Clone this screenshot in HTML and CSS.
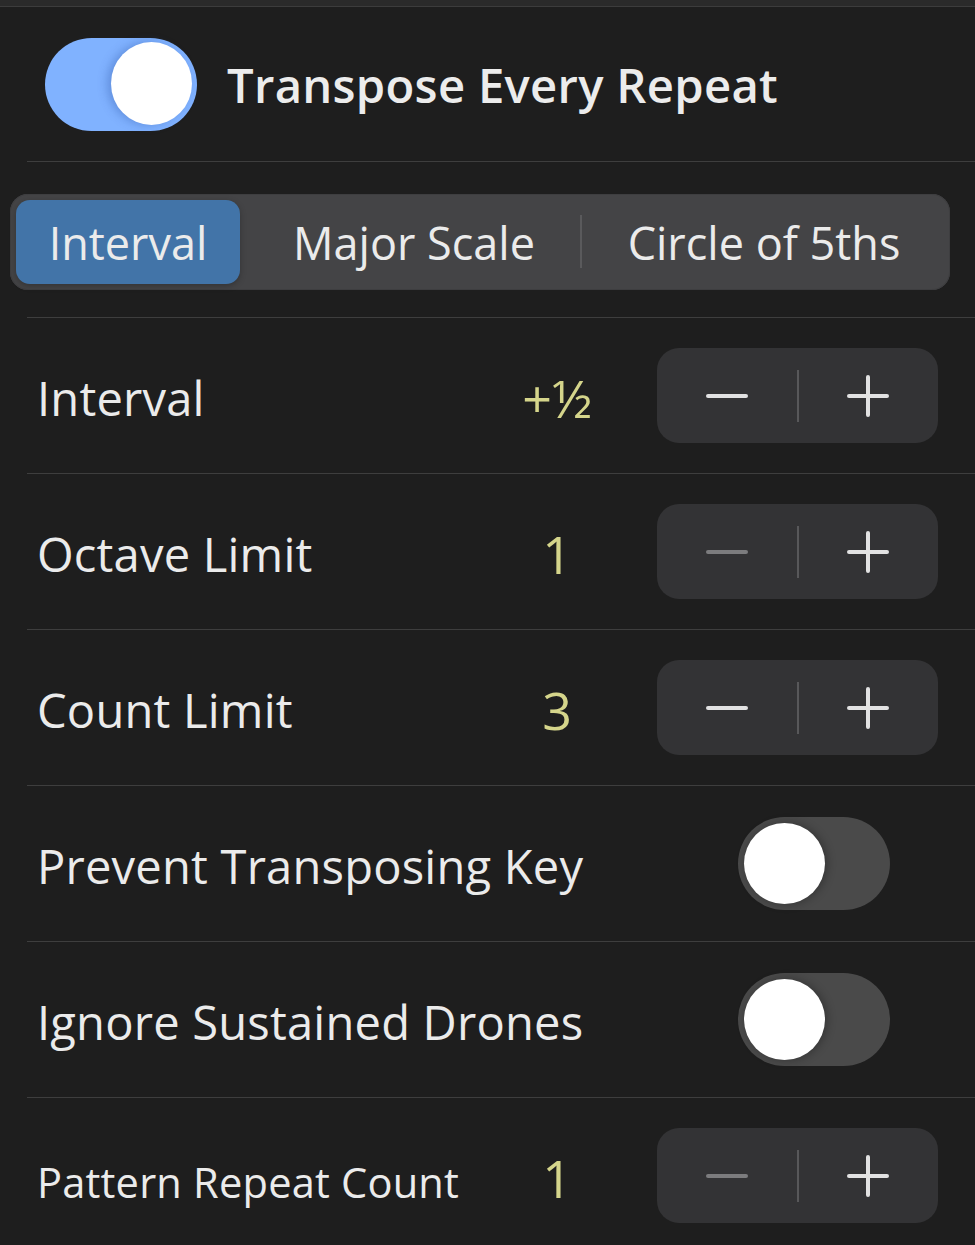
FILE: index.html
```html
<!DOCTYPE html>
<html>
<head>
<meta charset="utf-8">
<link rel="stylesheet" href="styles.css">
</head>
<body>
<div class="topbar"></div>
<div class="header">
  <div class="toggle on"><div class="knob"></div></div>
  <div class="title">Transpose Every Repeat</div>
</div>
<div class="segment-section">
  <div class="segmented">
    <div class="seg selected">Interval</div>
    <div class="seg mid">Major Scale</div>
    <div class="seg sep">Circle of 5ths</div>
  </div>
</div>
<div class="row">
  <div class="label">Interval</div>
  <div class="value">+½</div>
  <div class="stepper">
    <div class="btn minus"><span class="bar-h"></span></div>
    <div class="divider-v"></div>
    <div class="btn plus"><span class="bar-h"></span><span class="bar-v"></span></div>
  </div>
</div>
<div class="row">
  <div class="label">Octave Limit</div>
  <div class="value">1</div>
  <div class="stepper">
    <div class="btn minus disabled"><span class="bar-h"></span></div>
    <div class="divider-v"></div>
    <div class="btn plus"><span class="bar-h"></span><span class="bar-v"></span></div>
  </div>
</div>
<div class="row">
  <div class="label">Count Limit</div>
  <div class="value">3</div>
  <div class="stepper">
    <div class="btn minus"><span class="bar-h"></span></div>
    <div class="divider-v"></div>
    <div class="btn plus"><span class="bar-h"></span><span class="bar-v"></span></div>
  </div>
</div>
<div class="row">
  <div class="label">Prevent Transposing Key</div>
  <div class="toggle off"><div class="knob"></div></div>
</div>
<div class="row">
  <div class="label">Ignore Sustained Drones</div>
  <div class="toggle off"><div class="knob"></div></div>
</div>
<div class="row">
  <div class="label small">Pattern Repeat Count</div>
  <div class="value">1</div>
  <div class="stepper">
    <div class="btn minus disabled"><span class="bar-h"></span></div>
    <div class="divider-v"></div>
    <div class="btn plus"><span class="bar-h"></span><span class="bar-v"></span></div>
  </div>
</div>
</body>
</html>
```
FILE: styles.css
```css
html, body {
  margin: 0;
  padding: 0;
  background: #1e1e1e;
  font-family: "Open Sans", "Noto Sans", sans-serif;
  color: #ebebeb;
  overflow: hidden;
}
.topbar {
  height: 6px;
  background: #2a2a2a;
  border-bottom: 1px solid #3c3c3c;
}
.header {
  height: 154px;
  display: flex;
  align-items: center;
  padding-left: 45px;
  gap: 30px;
}
.title {
  font-size: 47.2px;
  font-weight: 600;
  letter-spacing: 0.3px;
  color: #ececec;
  padding-top: 2px;
}
.toggle {
  position: relative;
  width: 152px;
  height: 93px;
  border-radius: 47px;
  flex: none;
}
.toggle.on {
  background: #80b2ff;
}
.toggle.off {
  background: #4a4a4a;
  margin-right: 48px;
}
.toggle .knob {
  position: absolute;
  top: 6px;
  width: 81px;
  height: 81px;
  border-radius: 50%;
  background: #ffffff;
}
.toggle.on .knob {
  right: 5px;
  top: 4px;
  height: 83px;
  box-shadow: -4px 0 10px rgba(40, 80, 160, 0.35);
}
.toggle.off .knob {
  left: 6px;
  box-shadow: 2px 0 10px rgba(0, 0, 0, 0.3);
}
.segment-section {
  border-top: 1px solid #3e3e3e;
  margin-left: 27px;
  height: 156px;
  display: flex;
  align-items: center;
  padding-top: 5px;
  box-sizing: border-box;
}
.segmented {
  margin-left: -17px;
  width: 940px;
  height: 96px;
  box-sizing: border-box;
  padding: 6px;
  background: #444446;
  border-radius: 18px;
  display: grid;
  grid-template-columns: 224px 340px 1fr;
  box-shadow: inset 0 0 0 1px #3e3e40;
}
.seg {
  display: flex;
  align-items: center;
  justify-content: center;
  font-size: 45px;
  color: #ebebeb;
  position: relative;
}
.seg.mid {
  padding-left: 8px;
}
.seg.sep {
  padding-left: 4px;
}
.seg.selected {
  background: #4274a8;
  border-radius: 14px;
  box-shadow: 0 2px 6px rgba(0, 0, 0, 0.25);
}
.seg.sep::before {
  content: "";
  position: absolute;
  left: 0;
  top: 15px;
  bottom: 16px;
  width: 2px;
  background: #5a5a5c;
}
.row {
  border-top: 1px solid #3e3e3e;
  margin-left: 27px;
  height: 156px;
  box-sizing: border-box;
  display: flex;
  align-items: center;
  padding-left: 10px;
  padding-right: 37px;
}
.label {
  flex: 1;
  font-size: 47.1px;
  letter-spacing: 0.2px;
  padding-top: 4px;
}
.label.small {
  font-size: 41.6px;
  padding-top: 12px;
}
.value {
  width: 100px;
  text-align: center;
  font-size: 52px;
  color: #d5d58b;
  margin-right: 50px;
  padding-top: 4px;
}
.stepper {
  width: 281px;
  height: 95px;
  background: #333335;
  border-radius: 22px;
  display: flex;
  align-items: center;
}
.btn {
  flex: 1;
  height: 100%;
  position: relative;
}
.divider-v {
  width: 2px;
  height: 52px;
  background: #58585a;
}
.bar-h {
  position: absolute;
  left: 50%;
  top: 50%;
  width: 42px;
  height: 4px;
  margin-left: -21px;
  margin-top: -2px;
  border-radius: 2px;
  background: #e2e2e2;
}
.bar-v {
  position: absolute;
  left: 50%;
  top: 50%;
  width: 4px;
  height: 42px;
  margin-left: -2px;
  margin-top: -21px;
  border-radius: 2px;
  background: #e2e2e2;
}
.btn.disabled .bar-h {
  background: #7c7c7e;
}
```
